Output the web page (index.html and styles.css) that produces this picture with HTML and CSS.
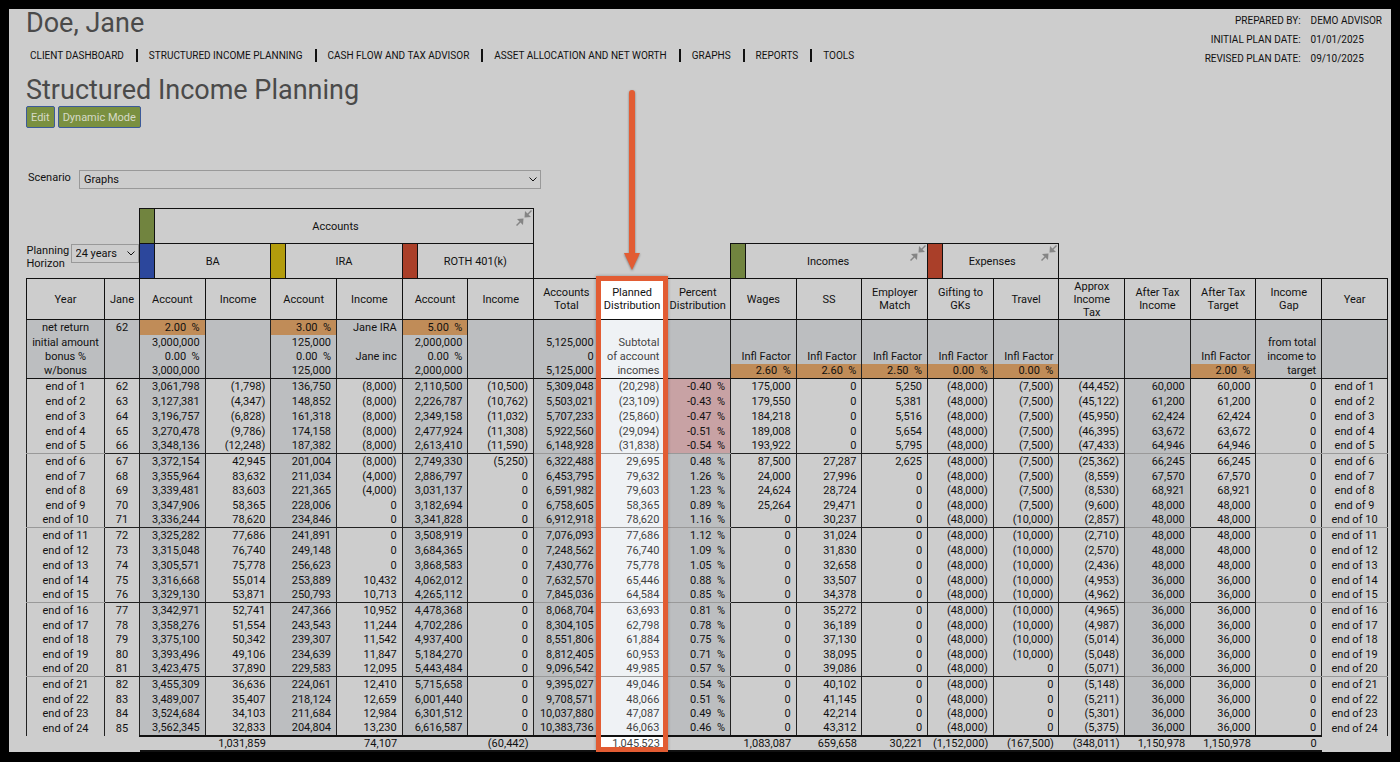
FILE: index.html
```html
<!DOCTYPE html>
<html lang="en">
<head>
    <meta charset="UTF-8">
    <meta name="viewport" content="width=device-width, initial-scale=1.0">
    <title>Structured Income Planning</title>
    <link rel="stylesheet" href="styles.css">
</head>
<body>

<div class="page">
    <header class="header">
        <div>
            <h1>Doe, Jane</h1>
            <nav class="nav">
                <a href="#">CLIENT DASHBOARD</a>
                <a href="#">STRUCTURED INCOME PLANNING</a>
                <a href="#">CASH FLOW AND TAX ADVISOR</a>
                <a href="#">ASSET ALLOCATION AND NET WORTH</a>
                <a href="#">GRAPHS</a>
                <a href="#">REPORTS</a>
                <a href="#">TOOLS</a>
            </nav>
            <h2>Structured Income Planning</h2>
        </div>
        <dl class="meta">
            <dt>PREPARED BY:</dt><dd>DEMO ADVISOR</dd>
            <dt>INITIAL PLAN DATE:</dt><dd>01/01/2025</dd>
            <dt>REVISED PLAN DATE:</dt><dd>09/10/2025</dd>
        </dl>
    </header>

    <div class="toolbar">
        <button class="btn">Edit</button>
        <button class="btn">Dynamic Mode</button>
    </div>

    <div class="scenario">
        <label for="scenario">Scenario</label>
        <span class="select">
            <select id="scenario"><option>Graphs</option></select>
            <svg class="chevron" viewBox="0 0 8 5"><path d="M0.500 0.500 L4 4 L7.500 0.500"/></svg>
        </span>
    </div>

    <div class="plan">
        <table>
            <colgroup><col class="col-year"><col class="col-age"><col span="19"></colgroup>
            <thead>
                <tr class="groups">
                    <td colspan="2"></td>
                    <th colspan="6"><div class="group"><span class="swatch green"></span><span class="name">Accounts</span><svg class="collapse" viewBox="0 0 16 16"><path d="M15 0 L16 1 L12.500 4.500 L15 7 L8.500 7.500 L9 1 L11.500 3.500 Z M1 16 L0 15 L3.500 11.500 L1 9 L7.500 8.500 L7 15 L4.500 12.500 Z"/></svg></div></th>
                    <td colspan="13"></td>
                </tr>
                <tr class="groups">
                    <td colspan="2">
                        <div class="horizon">
                            <label for="horizon">Planning Horizon</label>
                            <span class="select">
                                <select id="horizon"><option>24 years</option></select>
                                <svg class="chevron" viewBox="0 0 8 5"><path d="M0.500 0.500 L4 4 L7.500 0.500"/></svg>
                            </span>
                        </div>
                    </td>
                    <th colspan="2"><div class="group"><span class="swatch blue"></span><span class="name">BA</span></div></th>
                    <th colspan="2"><div class="group"><span class="swatch yellow"></span><span class="name">IRA</span></div></th>
                    <th colspan="2"><div class="group"><span class="swatch red"></span><span class="name">ROTH 401(k)</span></div></th>
                    <td colspan="3"></td>
                    <th colspan="3"><div class="group"><span class="swatch green"></span><span class="name">Incomes</span><svg class="collapse" viewBox="0 0 16 16"><path d="M15 0 L16 1 L12.500 4.500 L15 7 L8.500 7.500 L9 1 L11.500 3.500 Z M1 16 L0 15 L3.500 11.500 L1 9 L7.500 8.500 L7 15 L4.500 12.500 Z"/></svg></div></th>
                    <th colspan="2"><div class="group"><span class="swatch red"></span><span class="name">Expenses</span><svg class="collapse" viewBox="0 0 16 16"><path d="M15 0 L16 1 L12.500 4.500 L15 7 L8.500 7.500 L9 1 L11.500 3.500 Z M1 16 L0 15 L3.500 11.500 L1 9 L7.500 8.500 L7 15 L4.500 12.500 Z"/></svg></div></th>
                    <td colspan="5"></td>
                </tr>
                <tr class="heads">
                    <th>Year</th><th>Jane</th>
                    <th>Account</th><th>Income</th>
                    <th>Account</th><th>Income</th>
                    <th>Account</th><th>Income</th>
                    <th>Accounts Total</th><th class="planned">Planned Distribution</th><th>Percent Distribution</th>
                    <th>Wages</th><th>SS</th><th>Employer Match</th>
                    <th>Gifting to GKs</th><th>Travel</th>
                    <th>Approx<br>Income<br>Tax</th><th>After Tax Income</th><th>After Tax Target</th>
                    <th>Income<br>Gap</th><th>Year</th>
                </tr>
            </thead>
        </table>
        <div class="callout"></div>
        <svg class="arrow" viewBox="0 0 20 182"><path d="M10 3 V164" stroke="#e25c33" stroke-width="6" stroke-linecap="round"/><path d="M2 163 H18 L10 180 Z" fill="#e25c33"/></svg>
    </div>
</div>

<script>
    // cells are split on "|", a leading "*" marks an editable rate
    const initial = [
        'net return|62|*2.00  %||*3.00  %|Jane IRA|*5.00  %||||||||||||||',
        'initial amount||3,000,000||125,000||2,000,000||5,125,000|Subtotal||||||||||from total|',
        'bonus %||0.00  %||0.00  %|Jane inc|0.00  %||0|of account||Infl Factor|Infl Factor|Infl Factor|Infl Factor|Infl Factor|||Infl Factor|income to|',
        'w/bonus||3,000,000||125,000||2,000,000||5,125,000|incomes||*2.60  %|*2.60  %|*2.50  %|*0.00  %|*0.00  %|||*2.00  %|target|'
    ];

    const years = [
        '3,061,798|(1,798)|136,750|(8,000)|2,110,500|(10,500)|5,309,048|(20,298)|-0.40|175,000|0|5,250|(48,000)|(7,500)|(44,452)|60,000|60,000',
        '3,127,381|(4,347)|148,852|(8,000)|2,226,787|(10,762)|5,503,021|(23,109)|-0.43|179,550|0|5,381|(48,000)|(7,500)|(45,122)|61,200|61,200',
        '3,196,757|(6,828)|161,318|(8,000)|2,349,158|(11,032)|5,707,233|(25,860)|-0.47|184,218|0|5,516|(48,000)|(7,500)|(45,950)|62,424|62,424',
        '3,270,478|(9,786)|174,158|(8,000)|2,477,924|(11,308)|5,922,560|(29,094)|-0.51|189,008|0|5,654|(48,000)|(7,500)|(46,395)|63,672|63,672',
        '3,348,136|(12,248)|187,382|(8,000)|2,613,410|(11,590)|6,148,928|(31,838)|-0.54|193,922|0|5,795|(48,000)|(7,500)|(47,433)|64,946|64,946',
        '3,372,154|42,945|201,004|(8,000)|2,749,330|(5,250)|6,322,488|29,695|0.48|87,500|27,287|2,625|(48,000)|(7,500)|(25,362)|66,245|66,245',
        '3,355,964|83,632|211,034|(4,000)|2,886,797|0|6,453,795|79,632|1.26|24,000|27,996|0|(48,000)|(7,500)|(8,559)|67,570|67,570',
        '3,339,481|83,603|221,365|(4,000)|3,031,137|0|6,591,982|79,603|1.23|24,624|28,724|0|(48,000)|(7,500)|(8,530)|68,921|68,921',
        '3,347,906|58,365|228,006|0|3,182,694|0|6,758,605|58,365|0.89|25,264|29,471|0|(48,000)|(7,500)|(9,600)|48,000|48,000',
        '3,336,244|78,620|234,846|0|3,341,828|0|6,912,918|78,620|1.16|0|30,237|0|(48,000)|(10,000)|(2,857)|48,000|48,000',
        '3,325,282|77,686|241,891|0|3,508,919|0|7,076,093|77,686|1.12|0|31,024|0|(48,000)|(10,000)|(2,710)|48,000|48,000',
        '3,315,048|76,740|249,148|0|3,684,365|0|7,248,562|76,740|1.09|0|31,830|0|(48,000)|(10,000)|(2,570)|48,000|48,000',
        '3,305,571|75,778|256,623|0|3,868,583|0|7,430,776|75,778|1.05|0|32,658|0|(48,000)|(10,000)|(2,436)|48,000|48,000',
        '3,316,668|55,014|253,889|10,432|4,062,012|0|7,632,570|65,446|0.88|0|33,507|0|(48,000)|(10,000)|(4,953)|36,000|36,000',
        '3,329,130|53,871|250,793|10,713|4,265,112|0|7,845,036|64,584|0.85|0|34,378|0|(48,000)|(10,000)|(4,962)|36,000|36,000',
        '3,342,971|52,741|247,366|10,952|4,478,368|0|8,068,704|63,693|0.81|0|35,272|0|(48,000)|(10,000)|(4,965)|36,000|36,000',
        '3,358,276|51,554|243,543|11,244|4,702,286|0|8,304,105|62,798|0.78|0|36,189|0|(48,000)|(10,000)|(4,987)|36,000|36,000',
        '3,375,100|50,342|239,307|11,542|4,937,400|0|8,551,806|61,884|0.75|0|37,130|0|(48,000)|(10,000)|(5,014)|36,000|36,000',
        '3,393,496|49,106|234,639|11,847|5,184,270|0|8,812,405|60,953|0.71|0|38,095|0|(48,000)|(10,000)|(5,048)|36,000|36,000',
        '3,423,475|37,890|229,583|12,095|5,443,484|0|9,096,542|49,985|0.57|0|39,086|0|(48,000)|0|(5,071)|36,000|36,000',
        '3,455,309|36,636|224,061|12,410|5,715,658|0|9,395,027|49,046|0.54|0|40,102|0|(48,000)|0|(5,148)|36,000|36,000',
        '3,489,007|35,407|218,124|12,659|6,001,440|0|9,708,571|48,066|0.51|0|41,145|0|(48,000)|0|(5,211)|36,000|36,000',
        '3,524,684|34,103|211,684|12,984|6,301,512|0|10,037,880|47,087|0.49|0|42,214|0|(48,000)|0|(5,301)|36,000|36,000',
        '3,562,345|32,833|204,804|13,230|6,616,587|0|10,383,736|46,063|0.46|0|43,312|0|(48,000)|0|(5,375)|36,000|36,000'
    ];

    const totals = '|||1,031,859||74,107||(60,442)||1,045,523||1,083,087|659,658|30,221|(1,152,000)|(167,500)|(348,011)|1,150,978|1,150,978|0|';

    const columns = ['year', 'age', 'shade', '', 'shade', '', 'shade', '', 'shade soft', 'planned soft', 'shade soft',
        '', '', '', '', '', '', 'shade soft', '', 'soft', 'year soft'];

    const table = document.querySelector('table');

    const addRow = (body, cells) => {
        const row = body.insertRow();
        cells.forEach((text, i) => {
            const cell = row.insertCell();
            cell.className = columns[i];
            if (text.startsWith('*')) {
                cell.classList.add('rate');
                text = text.slice(1);
            }
            if (i === 10 && text.startsWith('-')) {
                cell.classList.add('negative');
            }
            cell.textContent = text;
        });
    }

    const addBody = (name) => {
        const body = table.createTBody();
        body.className = name;
        return body;
    }

    const initialBody = addBody('initial short');
    initial.forEach((line) => addRow(initialBody, line.split('|')));

    let body;
    years.forEach((line, i) => {
        if (i % 5 === 0) {
            body = addBody([5, 15, 20].includes(i) ? 'years short' : 'years');
        }
        const cells = line.split('|');
        cells[8] += '  %';
        addRow(body, ['end of ' + (i + 1), String(62 + i), ...cells, '0', 'end of ' + (i + 1)]);
    });

    addRow(addBody('totals'), totals.split('|'));
</script>

</body>
</html>
```
FILE: styles.css
```css
* {
    box-sizing: border-box;
}
body {
    margin: 0;
    padding: 9px 9px 10px;
    background: #000;
    color: #111;
    font-family: Roboto, sans-serif;
    font-size: 11px;
}
.page {
    background: #cdcdcd;
    padding: 1px 3px 0 17px;
}
.header {
    display: flex;
    justify-content: space-between;
    align-items: flex-start;
}
h1, h2 {
    margin: 0;
    color: #4a4a4a;
    font-size: 27px;
    font-weight: 400;
    line-height: 26px;
}
h2 {
    margin-top: 12px;
    line-height: 32px;
}
.nav {
    display: flex;
    margin-top: 13px;
}
.nav a {
    padding: 0 12px 0 11px;
    border-right: 2px solid #111;
    color: #111;
    font-size: 10px;
    line-height: 13px;
    text-decoration: none;
}
.nav a:first-child {
    padding-left: 4px;
}
.nav a:last-child {
    border-right: none;
}
.meta {
    display: grid;
    grid-template-columns: auto auto;
    column-gap: 10px;
    margin: 1px 6px 0 0;
    font-size: 10px;
    line-height: 19px;
}
.meta dt {
    text-align: right;
}
.meta dd {
    margin: 0;
}
.toolbar {
    display: flex;
    gap: 3px;
}
.btn {
    height: 22px;
    padding: 0 4px;
    border: 1px solid #3c5a9a;
    border-radius: 2px;
    background: #7a9040;
    color: #d6dac8;
    font-family: inherit;
    font-size: 11px;
    cursor: pointer;
}
.select {
    position: relative;
    height: 19px;
}
select {
    appearance: none;
    width: 100%;
    height: 19px;
    padding: 0 4px;
    border: 1px solid #999;
    border-radius: 0;
    background: #cdcdcd;
    color: #111;
    font-family: inherit;
    font-size: 11px;
}
.chevron {
    position: absolute;
    top: 7px;
    right: 4px;
    width: 8px;
    height: 5px;
    fill: none;
    stroke: #111;
    overflow: visible;
    pointer-events: none;
}
.scenario {
    display: flex;
    margin: 42px 0 19px;
    padding-left: 2px;
}
.scenario label {
    width: 51px;
    line-height: 15px;
}
.scenario .select {
    width: 462px;
}
.plan {
    position: relative;
}
table {
    width: 100%;
    table-layout: fixed;
    border-collapse: collapse;
}
.col-year {
    width: 78px;
}
.col-age {
    width: 35px;
}
th, td {
    padding: 0;
    font-weight: 400;
}
th {
    border: 1px solid #111;
}
.groups {
    height: 35px;
}
.groups td {
    vertical-align: top;
}
.group {
    display: flex;
    align-items: center;
    height: 34px;
}
.swatch {
    width: 15px;
    height: 100%;
    border-right: 1px solid #111;
}
.green {
    background: #71843f;
}
.blue {
    background: #2c479c;
}
.yellow {
    background: #b39c0c;
}
.red {
    background: #aa3f29;
}
.name {
    flex: 1;
}
.collapse {
    align-self: flex-start;
    width: 16px;
    height: 16px;
    margin: 1px 1px 0 0;
    fill: #858585;
}
.horizon {
    display: flex;
}
.horizon label {
    width: 44px;
    line-height: 13px;
}
.horizon .select {
    width: 68px;
}
.heads {
    height: 41px;
}
.heads th {
    line-height: 13px;
}
tbody td {
    height: 15px;
    padding: 0 5px 0 0;
    border-left: 1px solid #222;
    border-right: 1px solid #222;
    line-height: 13px;
    text-align: right;
    white-space: pre;
}
.short tr:nth-child(3) td {
    height: 14px;
}
tbody .year, tbody .age {
    padding: 0;
    text-align: center;
}
.initial td {
    background: #bcbec0;
}
.initial tr:last-child td {
    border-bottom: 1px solid #111;
}
.years .shade {
    background: #bcbec0;
}
.years tr:last-child td {
    border-bottom: 1px solid #222;
}
.years tr:last-child .soft, .years tr:last-child .year {
    border-bottom-color: #999;
}
.initial .rate {
    background: #c08c58;
}
.years .negative {
    background: #c8a2a4;
}
.heads .planned, .totals .planned {
    background: #fff;
}
tbody .planned {
    background: #eff2f5;
    color: #444;
}
.totals td {
    height: 15px;
    border: none;
    border-top: 2px solid #111;
    border-bottom: 2px solid #111;
}
.totals .year, .totals .age {
    border: none;
}
.years:nth-last-child(2) tr:last-child .year, .years:nth-last-child(2) tr:last-child .age {
    border-bottom: none;
}
/* highlight over the Planned Distribution column */
.callout {
    position: absolute;
    top: 68px;
    bottom: 0;
    left: calc(110px + (100% - 113px) * 7 / 19);
    width: calc(6px + (100% - 113px) / 19);
    border: 5px solid #e25c33;
    box-shadow: 0 0 3px rgba(0, 0, 0, 0.3);
}
.arrow {
    position: absolute;
    top: -118px;
    left: calc(103px + (100% - 113px) * 7.5 / 19);
    width: 20px;
    height: 182px;
    filter: drop-shadow(0 1px 1px rgba(0, 0, 0, 0.4));
}
```
